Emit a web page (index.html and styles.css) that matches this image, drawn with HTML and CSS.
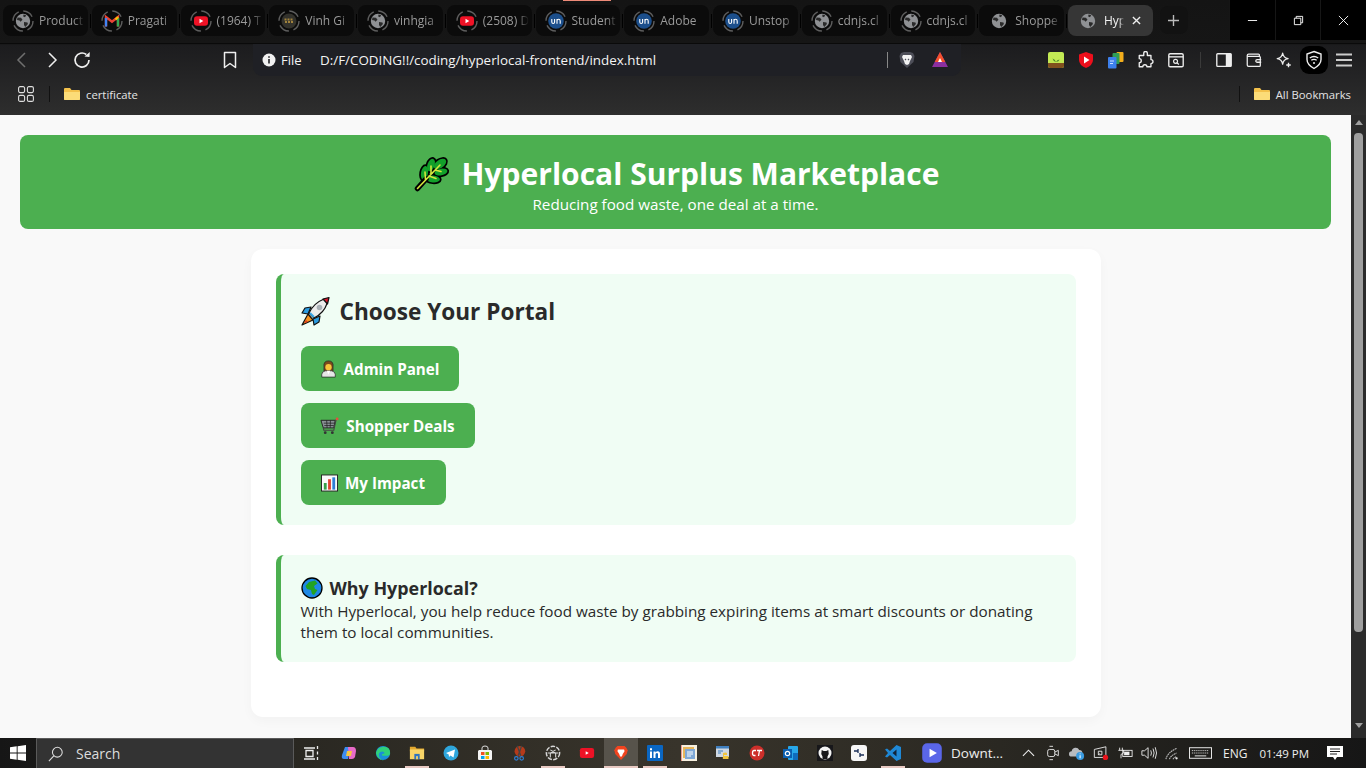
FILE: index.html
```html
<!DOCTYPE html>
<html lang="en">
<head>
  <meta charset="UTF-8" />
  <meta name="viewport" content="width=device-width, initial-scale=1.0"/>
  <title>Hyperlocal Surplus Marketplace</title>
  <link rel="stylesheet" href="styles.css">
</head>
<body>
  <svg class="sprites" aria-hidden="true">
    <symbol id="fav-globe" viewBox="0 0 24 24">
      <circle cx="12" cy="12" r="7.2" fill="#8f9194"/>
      <path d="M6.5 8.5l3.5.3 1.5 2-2 2-1-1.3-2.500-.5zM13 13l3.5.4.4 1.6-2.600 3-1.300-2zM12.5 5.5l2.700.8-1.200 2-1.800-.8z" fill="#2a2a2a"/>
    </symbol>
    <symbol id="fav-ring" viewBox="0 0 24 24">
      <circle cx="12" cy="12" r="10" fill="none" stroke="#5e5e5e" stroke-width="1.4" stroke-dasharray="11 4.7"/>
    </symbol>
    <symbol id="fav-gmail" viewBox="0 0 24 24">
      <path d="M6 17.5V8l6 4.8L18 8v9.5" fill="none" stroke="#ea4335" stroke-width="2.4"/>
      <path d="M6 17.5V9" stroke="#4285f4" stroke-width="2.4"/>
      <path d="M18 17.5V9" stroke="#34a853" stroke-width="2.4"/>
      <path d="M15.5 10.5L18 8" stroke="#fbbc04" stroke-width="2.4"/>
    </symbol>
    <symbol id="fav-yt" viewBox="0 0 24 24">
      <rect x="5" y="7.2" width="14" height="9.6" rx="3" fill="#f01226"/>
      <path d="M10.5 9.8v4.4l3.8-2.2z" fill="#fff"/>
    </symbol>
    <symbol id="fav-vinh" viewBox="0 0 24 24">
      <circle cx="12" cy="12" r="7.5" fill="#33322c"/>
      <path d="M7.5 10.5h9M8 13h8" stroke="#a0823c" stroke-width="1.8" stroke-dasharray="2 1"/>
    </symbol>
    <symbol id="fav-un" viewBox="0 0 24 24">
      <circle cx="12" cy="12" r="7.8" fill="#1c4f8c"/>
      <path d="M7.8 10v3q0 1.5 1.4 1.5T10.6 13V10M13 14.8V10M13 12q0-1.800 1.600-1.800t1.600 1.800v2.800" fill="none" stroke="#fff" stroke-width="1.1"/>
    </symbol>
  </svg>

  <div class="screen">
    <header class="browser">
      <div class="tabstrip">
        <div class="load-line"></div>
        <div class="tabs">
          <div class="tab"><svg class="fav"><use href="#fav-ring"/><use href="#fav-globe"/></svg><span class="tab-name">Product</span></div>
          <div class="tab"><svg class="fav"><use href="#fav-ring"/><use href="#fav-gmail"/></svg><span class="tab-name">Pragati</span></div>
          <div class="tab"><svg class="fav"><use href="#fav-ring"/><use href="#fav-yt"/></svg><span class="tab-name">(1964) T</span></div>
          <div class="tab"><svg class="fav"><use href="#fav-ring"/><use href="#fav-vinh"/></svg><span class="tab-name">Vinh Gi</span></div>
          <div class="tab"><svg class="fav"><use href="#fav-ring"/><use href="#fav-globe"/></svg><span class="tab-name">vinhgia</span></div>
          <div class="tab"><svg class="fav"><use href="#fav-ring"/><use href="#fav-yt"/></svg><span class="tab-name">(2508) D</span></div>
          <div class="tab"><svg class="fav"><use href="#fav-ring"/><use href="#fav-un"/></svg><span class="tab-name">Student</span></div>
          <div class="tab"><svg class="fav"><use href="#fav-ring"/><use href="#fav-un"/></svg><span class="tab-name">Adobe</span></div>
          <div class="tab"><svg class="fav"><use href="#fav-ring"/><use href="#fav-un"/></svg><span class="tab-name">Unstop</span></div>
          <div class="tab"><svg class="fav"><use href="#fav-ring"/><use href="#fav-globe"/></svg><span class="tab-name">cdnjs.cl</span></div>
          <div class="tab"><svg class="fav"><use href="#fav-ring"/><use href="#fav-globe"/></svg><span class="tab-name">cdnjs.cl</span></div>
          <div class="tab"><svg class="fav"><use href="#fav-globe"/></svg><span class="tab-name">Shoppe</span></div>
          <div class="tab tab-active"><svg class="fav"><use href="#fav-globe"/></svg><span class="tab-name">Hyp</span>
            <svg class="tab-close" viewBox="0 0 10 10"><path d="M1 1l8 8M9 1l-8 8" stroke="#eee" stroke-width="1.5"/></svg>
          </div>
          <div class="new-tab"><svg viewBox="0 0 12 12"><path d="M6 0v12M0 6h12" stroke="#bbb" stroke-width="1.5"/></svg></div>
        </div>
        <div class="win-btns">
          <div class="win-btn"><svg viewBox="0 0 12 12"><path d="M1 6h10" stroke="#fff"/></svg></div>
          <div class="win-btn"><svg viewBox="0 0 12 12"><path d="M1.5 3.5h7v7h-7zM3.5 3.5v-2h7v7h-2" fill="none" stroke="#fff"/></svg></div>
          <div class="win-btn"><svg viewBox="0 0 12 12"><path d="M1 1l10 10M11 1L1 11" stroke="#fff"/></svg></div>
        </div>
      </div>

      <div class="toolbar">
        <svg class="tool nav-first" viewBox="0 0 20 20"><path d="M13 3l-7 7 7 7" fill="none" stroke="#6f6f6f" stroke-width="1.5"/></svg>
        <svg class="tool" viewBox="0 0 20 20"><path d="M7 3l7 7-7 7" fill="none" stroke="#eee" stroke-width="1.5"/></svg>
        <svg class="tool" viewBox="0 0 20 20"><path d="M17 10a7 7 0 1 1-2.700-5.500" fill="none" stroke="#eee" stroke-width="1.7"/><path d="M12.5 6.5l5 .5.3-5z" fill="#eee"/></svg>
        <svg class="tool bookmark" viewBox="0 0 20 20"><path d="M4.5 2.5h11v15L10 13.5l-5.500 4z" fill="none" stroke="#eee" stroke-width="1.5" stroke-linejoin="round"/></svg>
        <div class="omnibox">
          <svg class="info" viewBox="0 0 14 14"><circle cx="7" cy="7" r="6.5" fill="#f1f1f1"/><path d="M7 6v4.5M7 3.2v1.600" stroke="#1f2024" stroke-width="1.6"/></svg>
          <span class="omni-file">File</span>
          <span class="omni-url">D:/F/CODING!!/coding/hyperlocal-frontend/index.html</span>
          <span class="omni-sep"></span>
          <svg class="omni-icon" viewBox="0 0 20 20"><path d="M4 3l3-1h6l3 1 1.5 3-1 6L10 18l-6.500-6-1-6z" fill="#4d4e58"/><path d="M6 5h8l1 2-2 4-1 3-2 1-2-1-1-3-2-4z" fill="#f3f3f3"/><path d="M8 9l1 1M12 9l-1 1" stroke="#4d4e58" stroke-width="1.2"/></svg>
          <svg class="omni-icon omni-bat" viewBox="0 0 20 20"><path d="M10 2l8 15H2z" fill="#8b2fa0"/><path d="M10 2l5.3 10H4.7z" fill="#f4502a"/><path d="M10 8l2 4H8z" fill="#fff"/></svg>
        </div>
        <svg class="ext ext-first" viewBox="0 0 18 18"><rect x="1" y="1" width="16" height="16" rx="2" fill="#c3ea54"/><path d="M1 12h16v3a2 2 0 0 1-2 2H3a2 2 0 0 1-2-2z" fill="#80501e"/><path d="M9 11Q6 10 5.5 7.5 8 8 9 11q1-2.500 3.500-2.500Q12 10.5 9 11" fill="#49882a"/></svg>
        <svg class="ext" viewBox="0 0 18 18"><path d="M9 1l7 2.5V9q0 5-7 8-7-3-7-8V3.500z" fill="#ee0f1c"/><path d="M7 5.5v7l5.500-3.500z" fill="#fff"/></svg>
        <svg class="ext" viewBox="0 0 18 18"><rect x="9.5" y="1" width="7" height="10" rx="1" fill="#f3ae1c"/><rect x="5.5" y="2" width="7" height="11" rx="1" fill="#2f9e56"/><rect x="1" y="6" width="8.5" height="11.5" rx="1" fill="#3d80ec"/><path d="M3 10h4M3 12.5h3" stroke="#cfe0ff"/></svg>
        <svg class="ext" viewBox="0 0 20 20"><path d="M7.5 2.5a2 2 0 0 1 4 0V5h4v4.5a2.200 2.200 0 0 1 0 4.500v3.500H11a2.200 2.200 0 0 0-4.500 0H2.500V13a2.200 2.200 0 0 0 0-4.500V5h5z" fill="none" stroke="#eee" stroke-width="1.5" stroke-linejoin="round"/></svg>
        <svg class="ext" viewBox="0 0 20 20"><rect x="2" y="3" width="16" height="14.5" rx="1.5" fill="none" stroke="#eee" stroke-width="1.5"/><path d="M2 6.5h16" stroke="#eee" stroke-width="1.5"/><circle cx="9.5" cy="11.5" r="2.2" fill="none" stroke="#eee" stroke-width="1.3"/><path d="M11 13l2.200 2" stroke="#eee" stroke-width="1.3"/></svg>
        <span class="tool-sep"></span>
        <svg class="ext" viewBox="0 0 20 20"><rect x="2" y="3" width="16" height="14" rx="1" fill="none" stroke="#eee" stroke-width="1.5"/><rect x="12" y="3" width="6" height="14" fill="#eee"/></svg>
        <svg class="ext" viewBox="0 0 20 20"><path d="M16 6V4.5a1 1 0 0 0-1-1H4a1.500 1.500 0 0 0-1.500 1.500v10.500a1.500 1.500 0 0 0 1.500 1.500h12a1 1 0 0 0 1-1V7a1 1 0 0 0-1-1H3" fill="none" stroke="#eee" stroke-width="1.4"/><path d="M18 9.5h-4.500a1.500 1.500 0 0 0 0 3H18" fill="none" stroke="#eee" stroke-width="1.4"/></svg>
        <svg class="ext" viewBox="0 0 20 20"><path d="M8.5 2.5q.8 5 6 6-5.200 1-6 6-.8-5-6-6 5.200-1 6-6z" fill="none" stroke="#eee" stroke-width="1.5" stroke-linejoin="round"/><path d="M15 13v5M12.5 15.5h5" stroke="#eee" stroke-width="1.5"/></svg>
        <div class="vpn"><svg viewBox="0 0 20 20"><path d="M10 1.5l7 2.5v5.500q0 5-7 9-7-4-7-9V4z" fill="none" stroke="#eee" stroke-width="1.4"/><path d="M5.8 8q4.200-3 8.400 0M7.300 10.300q2.700-2 5.400 0" fill="none" stroke="#eee" stroke-width="1.3"/><circle cx="10" cy="13" r="1" fill="#eee"/></svg></div>
        <svg class="ext ext-menu" viewBox="0 0 18 18"><path d="M1 3.5h16M1 9h16M1 14.5h16" stroke="#ccc" stroke-width="1.8"/></svg>
      </div>

      <div class="bookmarks">
        <svg class="apps" viewBox="0 0 16 16"><g fill="none" stroke="#ddd" stroke-width="1.1"><rect x=".6" y=".6" width="6" height="6" rx="1.5"/><rect x="9.4" y=".6" width="6" height="6" rx="1.5"/><rect x=".6" y="9.4" width="6" height="6" rx="1.5"/><rect x="9.4" y="9.4" width="6" height="6" rx="1.5"/></g></svg>
        <span class="mark-sep"></span>
        <svg class="folder" viewBox="0 0 16 14"><path d="M0 2a1 1 0 0 1 1-1h5l1.500 2H15a1 1 0 0 1 1 1v8a1 1 0 0 1-1 1H1a1 1 0 0 1-1-1z" fill="#f3c14b"/><path d="M0 5h16v7a1 1 0 0 1-1 1H1a1 1 0 0 1-1-1z" fill="#fbdc78"/></svg>
        <span class="mark-name">certificate</span>
        <span class="mark-push"></span>
        <span class="mark-sep"></span>
        <svg class="folder" viewBox="0 0 16 14"><path d="M0 2a1 1 0 0 1 1-1h5l1.500 2H15a1 1 0 0 1 1 1v8a1 1 0 0 1-1 1H1a1 1 0 0 1-1-1z" fill="#f3c14b"/><path d="M0 5h16v7a1 1 0 0 1-1 1H1a1 1 0 0 1-1-1z" fill="#fbdc78"/></svg>
        <span class="mark-name">All Bookmarks</span>
      </div>
    </header>

    <div class="viewport">
      <main class="page">
        <div class="hero">
          <h1>
            <svg class="emoji-herb" viewBox="0 0 36 36">
              <g fill="#000" stroke="#000" stroke-width="3.4">
                <ellipse cx="26" cy="8" rx="7" ry="4" transform="rotate(-35 26 8)"/>
                <ellipse cx="17" cy="9" rx="6.5" ry="3.5" transform="rotate(-70 17 9)"/>
                <ellipse cx="10.500" cy="17" rx="7" ry="3.5" transform="rotate(-80 10.500 17)"/>
                <ellipse cx="27" cy="16" rx="6.5" ry="3.4" transform="rotate(-10 27 16)"/>
                <ellipse cx="19" cy="23" rx="7" ry="3.4" transform="rotate(5 19 23)"/>
              </g>
              <g fill="#12a02a">
                <ellipse cx="26" cy="8" rx="7" ry="4" transform="rotate(-35 26 8)"/>
                <ellipse cx="17" cy="9" rx="6.5" ry="3.5" transform="rotate(-70 17 9)"/>
                <ellipse cx="10.500" cy="17" rx="7" ry="3.5" transform="rotate(-80 10.500 17)"/>
                <ellipse cx="27" cy="16" rx="6.5" ry="3.4" transform="rotate(-10 27 16)"/>
                <ellipse cx="19" cy="23" rx="7" ry="3.4" transform="rotate(5 19 23)"/>
              </g>
              <path d="M3.5 32.5L12 23" stroke="#000" stroke-width="5.5" stroke-linecap="round"/>
              <path d="M3.5 32.5L26 9M11.5 24l-.5-8M17 18l0-8M21 14l6 1.500M15 20l7 2.500" stroke="#d4e63c" stroke-width="1.6" fill="none" stroke-linecap="round"/>
            </svg>
            <span>Hyperlocal Surplus Marketplace</span>
          </h1>
          <p>Reducing food waste, one deal at a time.</p>
        </div>

        <div class="card">
          <section class="panel portal">
            <h2>
              <svg class="emoji-rocket" viewBox="0 0 30 30">
                <path d="M7 18L1 29l11-5z" fill="#f7921e" stroke="#111" stroke-width="1.2" stroke-linejoin="round"/>
                <path d="M5 24l-2 3 4-1z" fill="#e23b22"/>
                <path d="M10 11l-6 1-3 5 6 1zM19 20l-1 6-5 3-1-6z" fill="#2b9be0" stroke="#111" stroke-width="1.2" stroke-linejoin="round"/>
                <path d="M8 17Q13 7 22 3.5l5-1-1 5Q23 17 13 22z" fill="#ececec" stroke="#111" stroke-width="1.2" stroke-linejoin="round"/>
                <path d="M22 3l6-1.500L26.500 8z" fill="#d9142b" stroke="#111" stroke-width="1.2" stroke-linejoin="round"/>
                <circle cx="18.5" cy="11.5" r="2.8" fill="#a9b0b6"/>
                <path d="M9 17l4 4" stroke="#3aa7e8" stroke-width="2"/>
              </svg>
              <span>Choose Your Portal</span>
            </h2>
            <div class="portal-links">
              <a class="btn btn-admin">
                <svg class="emoji-btn" viewBox="0 0 18 20">
                  <path d="M4 8q-1-7 5-7t5 7v5H4z" fill="#7a4a1c" stroke="#222" stroke-width=".8"/>
                  <path d="M1.5 19v-3q0-3 4-4h7q4 1 4 4v3z" fill="#e6e6e6" stroke="#222" stroke-width=".8"/>
                  <circle cx="9" cy="8" r="3.5" fill="#f8c33b"/>
                  <path d="M7 12l2 4 2-4z" fill="#fff"/>
                </svg>
                <span>Admin Panel</span>
              </a>
              <a class="btn btn-shopper">
                <svg class="emoji-btn emoji-cart" viewBox="0 0 20 20">
                  <path d="M1 4h15l-1.500 8H3.500z" fill="#8a9196" stroke="#222" stroke-width="1"/>
                  <path d="M4 7h11M4.5 9.5h10M7 4l.5 8M11 4l-.3 8" stroke="#222" stroke-width=".8"/>
                  <path d="M3.5 12l.5 2.500h10.500L17 3" fill="none" stroke="#444" stroke-width="1.2"/>
                  <circle cx="18" cy="2.5" r="1.5" fill="#e2503e"/>
                  <circle cx="5.5" cy="17" r="1.5" fill="#333"/><circle cx="13" cy="17" r="1.5" fill="#333"/>
                </svg>
                <span>Shopper Deals</span>
              </a>
              <a class="btn btn-impact">
                <svg class="emoji-btn" viewBox="0 0 18 18">
                  <rect x=".5" y=".5" width="17" height="17" fill="#fafafa" stroke="#222"/>
                  <rect x="3" y="9" width="3" height="7" fill="#37a14a"/>
                  <rect x="7.5" y="5" width="3" height="11" fill="#e0402f"/>
                  <rect x="12" y="3" width="3" height="13" fill="#2f7fd6"/>
                </svg>
                <span>My Impact</span>
              </a>
            </div>
          </section>

          <section class="panel why">
            <h3>
              <svg class="emoji-globe" viewBox="0 0 22 22">
                <circle cx="11" cy="11" r="10" fill="#1e88e5" stroke="#000" stroke-width="1.3"/>
                <path d="M8 5l6-1.500 2.500 3L13 9l1 3 2.500 1-3.500 5-2-1-1-4-4-1-1.500-3z" fill="#22a322"/>
              </svg>
              <span>Why Hyperlocal?</span>
            </h3>
            <p>With Hyperlocal, you help reduce food waste by grabbing expiring items at smart discounts or donating them to local communities.</p>
          </section>
        </div>
      </main>
      <div class="scrollbar">
        <span class="arrow-up"></span>
        <span class="thumb"></span>
        <span class="arrow-down"></span>
      </div>
    </div>

    <footer class="taskbar">
      <div class="start"><svg viewBox="0 0 16 16"><path d="M0 2.3l6.700-1v6.200H0zM7.600 1.200L16 0v7.500H7.600zM0 8.500h6.700v6.200l-6.700-1zM7.600 8.500H16V16l-8.400-1.200z" fill="#fff"/></svg></div>
      <div class="search">
        <svg viewBox="0 0 18 18"><circle cx="10.5" cy="7" r="5.5" fill="none" stroke="#ddd" stroke-width="1.2"/><path d="M6.500 11L1 17" stroke="#ddd" stroke-width="1.2"/></svg>
        <span>Search</span>
      </div>
      <div class="task-apps">
        <div class="app app-view"><svg viewBox="0 0 16 16"><path d="M1 3h11M1 14h11M3 5.500h7v6H3zM14.500 1v3M14.500 6.500v3M14.500 12v3" fill="none" stroke="#eee" stroke-width="1.3"/></svg></div>
        <div class="app"><svg viewBox="0 0 16 16"><path d="M4 2h5L7 14H3Q0 14 1 10z" fill="#3d8bf0"/><path d="M7 2h5q3 0 3 4l-1 6q-1 2-3 2H8z" fill="#e86bc8"/><path d="M6 6h5l-1 5H5z" fill="#f5c542"/></svg></div>
        <div class="app"><svg viewBox="0 0 18 18"><circle cx="9" cy="9" r="8" fill="#1a8fd8"/><path d="M1 9Q3 2 10 2t7 7q0 3-3 3H9q-2 0-1-2 2 0 3-1-2-3-5-1-3 2-1 6 2 3 5 3-6 1-9-8z" fill="#2fd17a"/></svg></div>
        <div class="app app-on"><svg viewBox="0 0 18 16"><path d="M1 1h6l1.500 2H17v3H1z" fill="#e2a72e"/><rect x="1" y="4" width="16" height="11" fill="#f8d568"/><rect x="6" y="9" width="6" height="6" fill="#2f74c0"/><rect x="8" y="11.5" width="2" height="3.5" fill="#f8d568"/></svg></div>
        <div class="app"><svg viewBox="0 0 16 16"><circle cx="8" cy="8" r="7.5" fill="#2ea6dc"/><path d="M3 8l9-3.500-1.500 8-3-2-1.500 1.500-.3-2.500z" fill="#fff"/></svg></div>
        <div class="app"><svg viewBox="0 0 16 16"><path d="M2 5h12l1 1v8a1 1 0 0 1-1 1H2a1 1 0 0 1-1-1V6z" fill="#f4f4f4"/><path d="M5 5V3q0-2 3-2t3 2v2" fill="none" stroke="#ddd"/><rect x="4" y="7" width="3.5" height="3" fill="#f25022"/><rect x="8.5" y="7" width="3.5" height="3" fill="#7fba00"/><rect x="4" y="11" width="3.5" height="3" fill="#00a4ef"/><rect x="8.5" y="11" width="3.5" height="3" fill="#ffb900"/></svg></div>
        <div class="app"><svg viewBox="0 0 16 18"><circle cx="9" cy="7" r="6" fill="#b53a1a"/><path d="M6 1l4 11M11 1L7 12" stroke="#444" stroke-width="1.5"/><circle cx="5" cy="15" r="2" fill="none" stroke="#2f7fd6" stroke-width="1.3"/><circle cx="11" cy="15" r="2" fill="none" stroke="#2f7fd6" stroke-width="1.3"/></svg></div>
        <div class="app app-on"><svg viewBox="0 0 18 18"><circle cx="9" cy="9" r="7.5" fill="none" stroke="#d8d8d8" stroke-width="1.6" stroke-dasharray="5 1.5"/><path d="M6 5.500l6 3.500v5M12 5.500l-6 3.500v5M3 9h12" fill="none" stroke="#d8d8d8" stroke-width="1.2"/></svg></div>
        <div class="app"><svg viewBox="0 0 18 14"><rect x="1" y="1.5" width="16" height="11" rx="2.5" fill="#ee1226"/><path d="M7.5 5v4l3.500-2z" fill="#fff"/></svg></div>
        <div class="app app-active app-on"><svg viewBox="0 0 16 18"><path d="M4 1h8l2 2 1.500 3-1 4L8 17 1.500 10l-1-4L2 3z" fill="#f0441f"/><path d="M4.500 5h7l.5 2-2 3-1 3H7l-1-3-2-3z" fill="#fff"/></svg></div>
        <div class="app app-on"><svg viewBox="0 0 16 16"><rect width="16" height="16" rx="1" fill="#0a66c2"/><path d="M3 6.500h2V13H3zM3 3.200h2v2H3zM6.500 6.500h2v1q1-1.200 2.300-1.200 2.200 0 2.200 2.700v4h-2V9.300q0-1.300-1.100-1.300-1.400 0-1.400 1.500V13h-2z" fill="#fff"/></svg></div>
        <div class="app"><svg viewBox="0 0 16 16"><rect width="16" height="16" fill="#f7f0e0"/><rect x="2" y="2" width="11" height="11" fill="#e8b55a"/><rect x="4" y="4" width="10" height="10" fill="#7fa8d6"/><path d="M6 7h6M6 9h6M6 11h4" stroke="#fff"/><path d="M0 0v16" stroke="#e0463a"/></svg></div>
        <div class="app"><svg viewBox="0 0 16 16"><rect x="1" y="1" width="13" height="11" fill="#cfd8e2"/><rect x="1" y="1" width="13" height="2.5" fill="#3f7fbf"/><path d="M8 8q3-1 4 0v2H9v1h4.500v3H9q-2 0-1-2z" fill="#f2c53d"/><path d="M3 6h5M3 8h3" stroke="#3f7fbf"/></svg></div>
        <div class="app"><svg viewBox="0 0 16 16"><circle cx="8" cy="8" r="7.5" fill="#cc2f2a"/><path d="M7 5.500H5Q3.500 5.500 3.500 8t1.500 2.500h1.500M8 5.500h5M10.500 5.500L9.500 11" fill="none" stroke="#fff" stroke-width="1.3"/></svg></div>
        <div class="app"><svg viewBox="0 0 16 16"><rect x="5" y="1" width="10" height="14" rx="1" fill="#28a8ea"/><rect x="10" y="8" width="5" height="7" fill="#0f6cbd"/><rect x="0" y="4" width="9" height="9" fill="#0a5fb0"/><circle cx="4.5" cy="8.5" r="2.2" fill="none" stroke="#fff" stroke-width="1.2"/></svg></div>
        <div class="app"><svg viewBox="0 0 16 16"><rect width="16" height="16" fill="#17171a"/><circle cx="8" cy="8" r="6.5" fill="#f4f4f4"/><path d="M5.500 14v-2.500Q3.500 9 4.500 7l.2-2 2 1h2.600l2-1 .2 2q1 2-1 4.500V14z" fill="#17171a"/></svg></div>
        <div class="app"><svg viewBox="0 0 16 16"><rect width="16" height="16" rx="3" fill="#f7f7f7"/><path d="M3 6h4M7 4v4M13 10H9M9 8v4" stroke="#1b2f58" stroke-width="1.3"/></svg></div>
        <div class="app app-on"><svg viewBox="0 0 16 16"><path d="M11.500 0L16 2v12l-4.500 2L5 10l-3 2.500L0 11.500 3 8 0 4.500 2 3.500 5 6z" fill="#1f88d6"/><path d="M11.500 4.500L7.500 8l4 3.500z" fill="#10233a"/></svg></div>
        <div class="app app-player"><svg viewBox="0 0 18 18"><rect x="1" y="1" width="16" height="16" rx="4" fill="#5a66e8"/><path d="M7 5.500v7l6-3.500z" fill="#fff"/></svg></div>
        <span class="app-title">Downt...</span>
      </div>
      <div class="tray">
        <svg class="tray-ico tray-chev" viewBox="0 0 14 8"><path d="M1 7l6-6 6 6" fill="none" stroke="#eee" stroke-width="1.2"/></svg>
        <svg class="tray-ico" viewBox="0 0 14 18"><rect x="1" y="5" width="8" height="8" rx="2" fill="none" stroke="#eee"/><path d="M9 8l4-2v6l-4-2M3 1.500h4M3 16.500h4" fill="none" stroke="#eee"/></svg>
        <svg class="tray-ico" viewBox="0 0 18 18"><path d="M3 13a3 3 0 0 1 0-6 4.500 4.500 0 0 1 8.500-1.500A3.500 3.500 0 0 1 15 9H9v4z" fill="#b9bcc0"/><circle cx="12.5" cy="12.5" r="4.5" fill="#3a9be0"/><path d="M12.500 11.500v3.500M12.500 9.500v1" stroke="#fff" stroke-width="1.2"/></svg>
        <svg class="tray-ico" viewBox="0 0 18 18"><path d="M1.500 5l13-3v12h-13z" fill="none" stroke="#eee"/><path d="M10 7H6v4l1.500-1.500M6 11h4V7" fill="none" stroke="#eee"/><circle cx="14" cy="14" r="3" fill="#e8141c"/></svg>
        <svg class="tray-ico" viewBox="0 0 18 14"><path d="M3 1v3M6 1v3M1.500 4h6v2q0 2-3 2.500V13" fill="none" stroke="#eee"/><rect x="6.5" y="4" width="10.5" height="7" fill="none" stroke="#eee"/><rect x="8" y="5.5" width="6" height="4" fill="#eee"/></svg>
        <svg class="tray-ico" viewBox="0 0 18 16"><path d="M1 5.500h3L8 2v12L4 10.500H1zM11 5q1.500 3 0 6M13.500 3q2.500 5 0 10M16 1.500q3 6.500 0 13" fill="none" stroke="#eee"/></svg>
        <svg class="tray-ico" viewBox="0 0 18 16"><path d="M1 15Q3 7 13 3M5 15q1-4 8-7M9 15q1-2 4-3" fill="none" stroke="#bbb" stroke-width="1.2" stroke-dasharray="2 .6"/><circle cx="13" cy="14" r="1.3" fill="#eee"/></svg>
        <svg class="tray-keys" viewBox="0 0 24 12"><rect x=".5" y=".5" width="23" height="11" fill="none" stroke="#eee"/><path d="M3 3.500h18M3 6h18" stroke="#eee" stroke-dasharray="1 1"/><path d="M6 9h12" stroke="#eee"/></svg>
        <span class="tray-lang">ENG</span>
        <span class="tray-time">01:49 PM</span>
        <svg class="tray-note" viewBox="0 0 16 16"><path d="M0 1h16v11H10l-2 3-2-3H0z" fill="#fff"/><path d="M3 4h10M3 6.500h10M3 9h7" stroke="#222"/></svg>
      </div>
    </footer>
  </div>
</body>
</html>
```

FILE: styles.css
```css
* {
  box-sizing: border-box;
}

body {
  font-family: 'Open Sans', 'Noto Sans', sans-serif;
  margin: 0;
  padding: 0;
  background-color: #111;
  overflow: hidden;
}

.sprites {
  display: none;
}

.screen {
  width: 1366px;
  height: 768px;
  display: flex;
  flex-direction: column;
  overflow: hidden;
}

/* browser chrome */
.browser {
  height: 115px;
  flex: none;
  background: linear-gradient(#141414 0, #161616 44px, #1c1c1e 45px, #2d2d2d 112px, #2f2f2f 115px);
}

.tabstrip {
  height: 44px;
  display: flex;
  position: relative;
  border-bottom: 1px solid #0a0a0a;
}

.load-line {
  position: absolute;
  top: 0;
  left: 563px;
  width: 48px;
  height: 1px;
  background-color: #ee8a78;
}

.tabs {
  flex: 1;
  display: flex;
  align-items: flex-start;
  gap: 4px;
  padding: 5px 0 0 3px;
}

.tab {
  width: 84.75px;
  height: 31px;
  flex: none;
  display: flex;
  align-items: center;
  padding-left: 8px;
  position: relative;
  border-radius: 8px;
  background-color: #0b0b0b;
  color: #9a9a9a;
  font-size: 12px;
}

.tab::after {
  content: "";
  position: absolute;
  right: -3px;
  top: 9px;
  width: 1px;
  height: 14px;
  background-color: #000;
}

.tab-active {
  background-color: #363636;
  color: #f2f2f2;
}

.tab-active::after {
  display: none;
}

.fav {
  width: 24px;
  height: 24px;
  flex: none;
}

.tab-name {
  margin-left: 4px;
  width: 46px;
  white-space: nowrap;
  -webkit-mask-image: linear-gradient(to right, #000 75%, transparent);
  mask-image: linear-gradient(to right, #000 75%, transparent);
}

.tab-active .tab-name {
  width: 20px;
}

.tab-close {
  width: 9px;
  height: 9px;
  margin-left: 8px;
}

.new-tab {
  width: 28px;
  height: 28px;
  margin: 1px 0 0 3px;
  display: flex;
  align-items: center;
  justify-content: center;
  border-radius: 8px;
  background-color: #121212;
}

.new-tab svg {
  width: 11px;
  height: 11px;
}

.win-btns {
  width: 137px;
  height: 40px;
  flex: none;
  display: flex;
  background-color: #000;
}

.win-btn {
  flex: 1;
  display: flex;
  align-items: center;
  justify-content: center;
  border-left: 1px solid #161616;
}

.win-btn svg {
  width: 11px;
  height: 11px;
}

.toolbar {
  height: 32px;
  display: flex;
  align-items: center;
}

.tool {
  width: 20px;
  height: 20px;
  flex: none;
  margin-right: 10px;
}

.nav-first {
  margin-left: 12px;
}

.bookmark {
  margin: 0 13px 0 118px;
}

.omnibox {
  width: 708px;
  height: 32px;
  flex: none;
  display: flex;
  align-items: center;
  padding-left: 9px;
  border-radius: 0 0 9px 9px;
  background-color: #1f2025;
  color: #f4f4f4;
  font-size: 13.4px;
}

.info {
  width: 14px;
  height: 14px;
  flex: none;
}

.omni-file {
  margin-left: 5px;
  width: 39px;
  font-size: 13px;
}

.omni-url {
  width: 567px;
  white-space: nowrap;
}

.omni-sep {
  width: 1px;
  height: 16px;
  background-color: #888;
}

.omni-icon {
  width: 20px;
  height: 20px;
  margin-left: 9px;
  flex: none;
}

.omni-bat {
  margin-left: 13px;
}

.ext {
  width: 18px;
  height: 18px;
  flex: none;
  margin-right: 12px;
}

.ext-first {
  margin-left: 86px;
}

.tool-sep {
  width: 1px;
  height: 16px;
  margin: 0 14px 0 3px;
  background-color: #3a3a3a;
}

.vpn {
  width: 28px;
  height: 28px;
  flex: none;
  margin: 0 7px 0 -5px;
  display: flex;
  align-items: center;
  justify-content: center;
  border-radius: 9px;
  background-color: #000;
}

.vpn svg {
  width: 20px;
  height: 20px;
}

.ext-menu {
  margin-right: 0;
}

.bookmarks {
  height: 36px;
  display: flex;
  align-items: center;
  padding: 0 15px 0 18px;
  color: #e4e4e4;
  font-size: 11.3px;
}

.apps {
  width: 16px;
  height: 16px;
  flex: none;
}

.mark-sep {
  width: 1px;
  height: 16px;
  flex: none;
  margin: 0 14px 0 15px;
  background-color: #111;
}

.folder {
  width: 16px;
  height: 14px;
  flex: none;
  margin-right: 6px;
}

.mark-push {
  flex: 1;
}

/* page area */
.viewport {
  height: 623px;
  flex: none;
  display: flex;
}

.page {
  flex: 1;
  padding: 20px 20px 0;
  background-color: #f9f9f9;
  color: #2a2a2a;
}

.hero {
  height: 94px;
  padding-top: 19px;
  border-radius: 8px;
  background-color: #4caf50;
  color: #fff;
  text-align: center;
}

.hero h1 {
  margin: 0 0 0 2px;
  display: flex;
  justify-content: center;
  align-items: center;
  gap: 12px;
  font-size: 30px;
  line-height: 40px;
  font-weight: 700;
}

.emoji-herb {
  width: 36px;
  height: 36px;
}

.hero p {
  margin: 0;
  font-size: 15.2px;
  line-height: 20px;
}

.card {
  width: 850px;
  height: 468px;
  margin: 20px auto 0;
  padding: 25px;
  border-radius: 12px;
  background-color: #fff;
  box-shadow: 0 4px 12px rgba(0, 0, 0, 0.03);
}

.panel {
  padding: 20px;
  border-left: 5px solid #4caf50;
  border-radius: 8px;
  background-color: #f0fdf4;
}

.portal {
  height: 251px;
}

.why {
  height: 107px;
  margin-top: 30px;
}

.panel h2 {
  margin: 0;
  display: flex;
  align-items: center;
  gap: 9px;
  height: 34px;
  font-size: 22.6px;
  font-weight: 700;
}

.emoji-rocket {
  width: 30px;
  height: 30px;
}

.portal-links {
  display: flex;
  flex-direction: column;
  align-items: flex-start;
  gap: 12px;
  margin-top: 18px;
}

.btn {
  height: 45px;
  display: flex;
  align-items: center;
  justify-content: center;
  gap: 7px;
  border-radius: 8px;
  background-color: #4caf50;
  color: #fff;
  font-size: 15.2px;
  font-weight: 700;
}

.btn-admin {
  width: 158px;
}

.btn-shopper {
  width: 174px;
}

.btn-impact {
  width: 145px;
}

.emoji-btn {
  width: 17px;
  height: 18px;
  flex: none;
}

.emoji-cart {
  width: 19px;
  height: 20px;
}

.why h3 {
  margin: 0;
  display: flex;
  align-items: center;
  gap: 7px;
  height: 26px;
  font-size: 17.9px;
  font-weight: 700;
}

.emoji-globe {
  width: 22px;
  height: 22px;
  flex: none;
}

.why p {
  margin: 0;
  font-size: 15.25px;
  line-height: 21px;
}

.scrollbar {
  width: 15px;
  flex: none;
  display: flex;
  flex-direction: column;
  align-items: center;
  padding-top: 3px;
  background-color: #2b2b2b;
}

.arrow-up {
  width: 0;
  height: 0;
  border: 4.5px solid transparent;
  border-top: 0;
  border-bottom: 5px solid #a0a0a0;
  margin-top: 2px;
}

.thumb {
  width: 9px;
  height: 499px;
  margin-top: 8px;
  border-radius: 4px;
  background-color: #9f9f9f;
}

.arrow-down {
  width: 0;
  height: 0;
  border: 4.5px solid transparent;
  border-bottom: 0;
  border-top: 5px solid #a0a0a0;
  margin-top: 91px;
}

/* taskbar */
.taskbar {
  height: 30px;
  flex: none;
  display: flex;
  background: linear-gradient(to right, #161616 0, #2a2822 300px, #38342b 680px, #2a2822 1000px, #161616 1366px);
  color: #eee;
}

.start {
  width: 36px;
  display: flex;
  align-items: center;
  justify-content: center;
  flex: none;
}

.start svg {
  width: 16px;
  height: 16px;
}

.search {
  width: 258px;
  flex: none;
  display: flex;
  align-items: center;
  gap: 12px;
  padding-left: 11px;
  background-color: #333;
  border: 1px solid #5a5a5a;
  border-bottom: 0;
  color: #ddd;
  font-size: 14px;
}

.search svg {
  width: 16px;
  height: 16px;
}

.task-apps {
  display: flex;
  align-items: stretch;
}

.app {
  width: 34px;
  flex: none;
  display: flex;
  align-items: center;
  justify-content: center;
  position: relative;
}

.app svg {
  width: 16px;
  height: 16px;
}

.app-view {
  margin-right: 4px;
}

.app-player {
  margin-left: 5px;
}

.app-player svg {
  width: 22px;
  height: 22px;
}

.app-active {
  background-color: #57534b;
}

.app-on::after {
  content: "";
  position: absolute;
  left: 5px;
  right: 5px;
  bottom: 0;
  height: 2px;
  background-color: #e8c9c2;
}

.app-active::after {
  left: 0;
  right: 0;
}

.app-title {
  margin-left: 2px;
  align-self: center;
  font-size: 13.5px;
  white-space: nowrap;
}

.tray {
  flex: 1;
  display: flex;
  align-items: center;
  padding-left: 19px;
}

.tray-ico {
  width: 16px;
  height: 16px;
  flex: none;
  margin-right: 8px;
}

.tray-chev {
  width: 13px;
  margin-right: 10px;
}

.tray-keys {
  width: 23px;
  height: 12px;
  flex: none;
}

.tray-lang {
  margin-left: 11px;
  font-size: 12px;
}

.tray-time {
  margin-left: 12px;
  font-size: 11.5px;
  white-space: nowrap;
}

.tray-note {
  width: 16px;
  height: 16px;
  margin-left: 18px;
  flex: none;
}
```
